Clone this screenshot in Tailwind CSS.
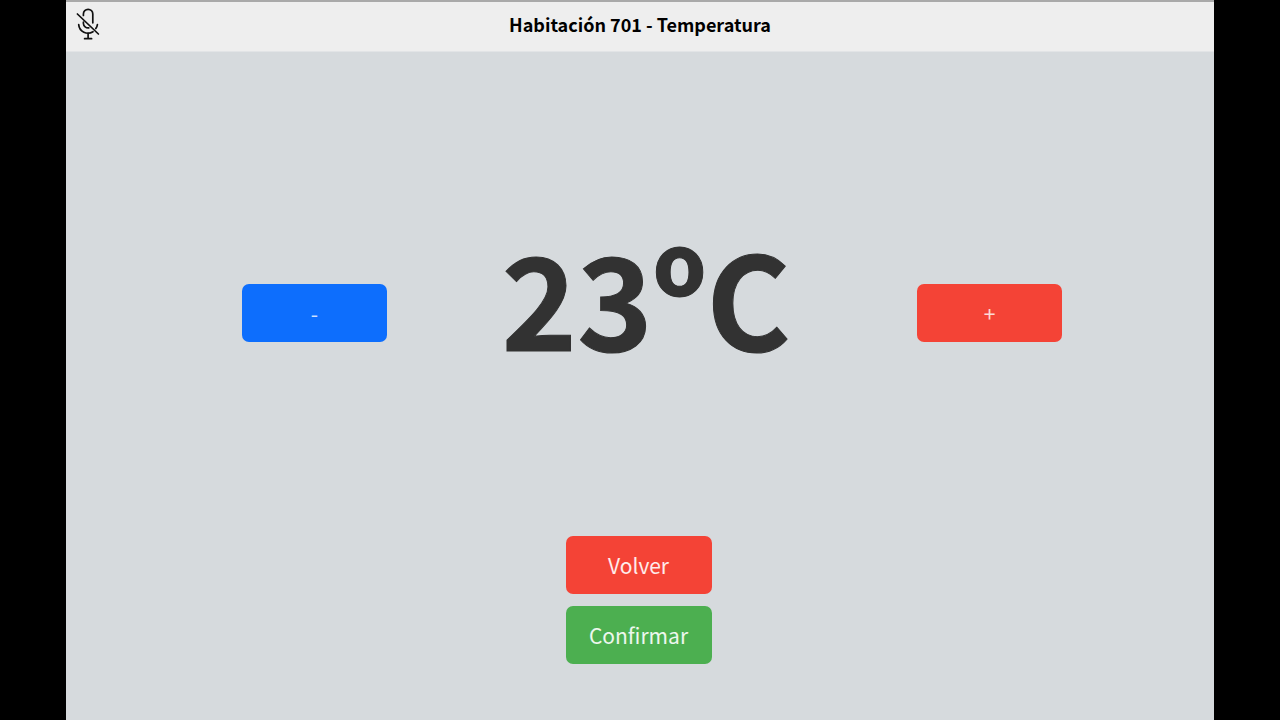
<!DOCTYPE html>
<html lang="es">
<head>
<meta charset="utf-8">
<meta name="viewport" content="width=device-width, initial-scale=1">
<title>Habitación 701 - Temperatura</title>
<script src="https://cdn.jsdelivr.net/npm/@tailwindcss/browser@4"></script>
</head>
<body class="flex min-h-screen bg-black px-[66px] font-['Noto_Sans_CJK_SC',sans-serif]">
<div class="flex flex-1 flex-col bg-[#d6dadd]">
  <header class="grid h-[52px] grid-cols-[1fr_auto_1fr] items-center border-t-2 border-b border-t-[#a9a9a9] border-b-[#e2e4e6] bg-[#eeeeee] px-2 pb-1.5">
    <button type="button" aria-label="Activar micrófono" class="justify-self-start">
      <svg class="block h-8 w-7" viewBox="0 0 28 32" fill="none" stroke="#111" stroke-width="1.7" stroke-linecap="round" stroke-linejoin="round" aria-hidden="true">
        <path d="M9.4 7.4V6a4.7 4.7 0 0 1 9.4 0v8.8M9.4 14.2v1.3a4.7 4.7 0 0 0 5.4 4.4"/>
        <path d="M4.7 16.6a9.3 9.3 0 0 0 14.3 7.1M21.8 20.6a9.3 9.3 0 0 0 1.6-4"/>
        <path d="M14.1 25.2v5.4M10.6 30.7h7M3.4 6l21 20"/>
      </svg>
    </button>
    <h1 class="text-lg leading-6 font-bold text-black">Habitación 701 - Temperatura</h1>
  </header>
  <main class="flex flex-1 flex-col pt-[165px]">
    <div class="flex items-center justify-between pr-[152px] pl-[176px]">
      <button type="button" aria-label="Bajar temperatura" class="h-[58px] w-[145px] rounded-[7px] bg-[#0d6efd] text-[21px] leading-8 text-white/80">-</button>
      <output class="pr-3 pb-[34px] text-[128px] leading-[158px] font-bold text-[#323232] [-webkit-text-stroke:1px_#323232]">23ºC</output>
      <button type="button" aria-label="Subir temperatura" class="h-[58px] w-[145px] rounded-[7px] bg-[#f44336] text-[21px] leading-8 text-white/80">+</button>
    </div>
    <div class="mt-[127px] flex flex-col items-center gap-3 pr-[3px] pb-14">
      <button type="button" class="h-[58px] w-[146px] rounded-[7px] bg-[#f44336] text-[21px] leading-8 text-white/90">Volver</button>
      <button type="button" class="h-[58px] w-[146px] rounded-[7px] bg-[#4caf50] text-[21px] leading-8 text-white/90">Confirmar</button>
    </div>
  </main>
</div>
</body>
</html>
